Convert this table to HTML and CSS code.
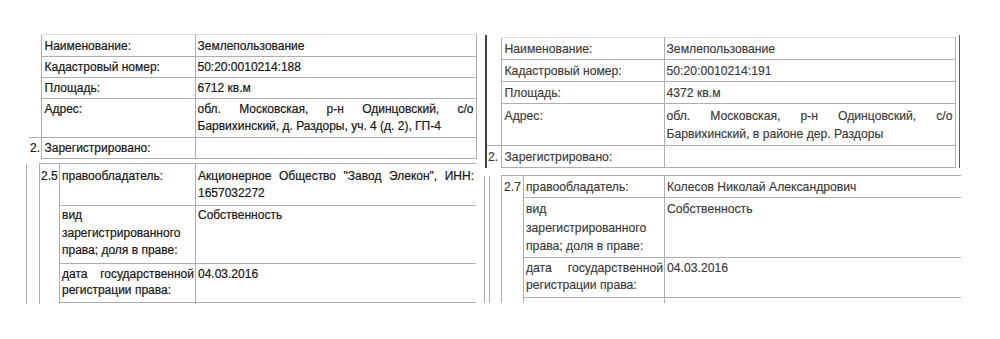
FILE: index.html
```html
<!DOCTYPE html>
<html lang="ru">
<head>
<meta charset="utf-8">
<title>Выписка</title>
<link rel="stylesheet" href="styles.css">
</head>
<body>
<div class="page">
  <section class="panel panel-left">
    <div class="block ltop">
      <table class="tbl">
        <colgroup><col class="c-n1"><col class="c-l1"><col class="c-v1"></colgroup>
        <tr class="first"><td class="n"></td><td class="l">Наименование:</td><td class="v">Землепользование</td></tr>
        <tr><td class="n"></td><td class="l">Кадастровый номер:</td><td class="v">50:20:0010214:188</td></tr>
        <tr><td class="n"></td><td class="l">Площадь:</td><td class="v">6712 кв.м</td></tr>
        <tr class="addr"><td class="n"></td><td class="l">Адрес:</td><td class="v j">обл. Московская, р-н Одинцовский, с/о Барвихинский, д. Раздоры, уч. 4 (д. 2), ГП-4</td></tr>
        <tr><td class="n nt">2.</td><td class="l">Зарегистрировано:</td><td class="v"></td></tr>
      </table>
    </div>
    <div class="block lbot">
      <table class="tbl">
        <colgroup><col class="c-o2"><col class="c-n2"><col class="c-l2"><col class="c-v2"></colgroup>
        <tr class="r-a"><td class="o" rowspan="4"></td><td class="n2 nt" rowspan="4">2.5</td><td class="l">правообладатель:</td><td class="v j">Акционерное Общество "Завод Элекон", ИНН: 1657032272</td></tr>
        <tr class="r-b"><td class="l">вид зарегистрированного права; доля в праве:</td><td class="v">Собственность</td></tr>
        <tr class="r-c"><td class="l j">дата государственной регистрации права:</td><td class="v">04.03.2016</td></tr>
        <tr class="r-d"><td class="l"></td><td class="v"></td></tr>
      </table>
    </div>
  </section>

  <section class="panel panel-right">
    <div class="block rtop">
      <table class="tbl">
        <colgroup><col class="c-n3"><col class="c-l3"><col class="c-v3"></colgroup>
        <tr class="first"><td class="n"></td><td class="l">Наименование:</td><td class="v">Землепользование</td></tr>
        <tr><td class="n"></td><td class="l">Кадастровый номер:</td><td class="v">50:20:0010214:191</td></tr>
        <tr><td class="n"></td><td class="l">Площадь:</td><td class="v">4372 кв.м</td></tr>
        <tr class="addr"><td class="n"></td><td class="l">Адрес:</td><td class="v j">обл. Московская, р-н Одинцовский, с/о Барвихинский, в районе дер. Раздоры</td></tr>
        <tr><td class="n nt">2.</td><td class="l">Зарегистрировано:</td><td class="v"></td></tr>
      </table>
    </div>
    <div class="block rbot">
      <table class="tbl">
        <colgroup><col class="c-o4"><col class="c-e4"><col class="c-n4"><col class="c-l4"><col class="c-v4"></colgroup>
        <tr class="r-a"><td class="o" rowspan="4"></td><td class="e" rowspan="4"></td><td class="n2 nt" rowspan="4">2.7</td><td class="l">правообладатель:</td><td class="v">Колесов Николай Александрович</td></tr>
        <tr class="r-b"><td class="l">вид зарегистрированного права; доля в праве:</td><td class="v">Собственность</td></tr>
        <tr class="r-c"><td class="l j">дата государственной регистрации права:</td><td class="v">04.03.2016</td></tr>
        <tr class="r-d"><td class="l"></td><td class="v"></td></tr>
      </table>
    </div>
  </section>
</div>
</body>
</html>
```

FILE: styles.css
```css
html, body {
  margin: 0;
  padding: 0;
  background: #ffffff;
}

body {
  width: 1000px;
  height: 339px;
  overflow: hidden;
  font-family: "Liberation Sans", Arial, sans-serif;
  font-size: 12px;
}

.page {
  display: flex;
  align-items: flex-start;
  padding-left: 26px;
  gap: 8px;
}

.panel {
  display: flex;
  flex-direction: column;
}

.panel-left {
  width: 450px;
  color: #161616;
  -webkit-text-stroke: 0.2px #161616;
}

.panel-right {
  width: 477px;
  color: #3a3a3a;
  font-size: 12.2px;
  -webkit-text-stroke: 0.15px #3a3a3a;
}

.tbl {
  border-collapse: collapse;
  table-layout: fixed;
}

.tbl td {
  vertical-align: top;
  padding: 2px 2px 1px 3px;
  line-height: 17px;
  overflow: hidden;
}

.tbl td.v { padding-left: 2px; }

.tbl td.l,
.tbl td.v {
  border: 1px solid #aeaeae;
}

.tbl tr.first td.l,
.tbl tr.first td.v {
  border-top-color: #dedede;
}

.tbl td.n {
  padding: 2px 0 0 1px;
  border: none;
}

.tbl td.nt {
  border-top: 1px solid #aeaeae;
}

.j {
  text-align: justify;
}

/* ---------- left top ---------- */
.ltop {
  margin-top: 34px;
  margin-left: 3px;
}
.ltop .tbl { width: 447px; }
.c-n1 { width: 12px; }
.c-l1 { width: 154px; }
.c-v1 { width: 281px; }
.ltop tr.first td { padding-top: 3px; }
.ltop tr.addr td { padding-top: 2px; padding-bottom: 2px; }

/* ---------- left bottom ---------- */
.lbot {
  margin-top: 4px;
  height: 141px;
  overflow: hidden;
}
.lbot .tbl { width: 450px; }
.c-o2 { width: 13px; }
.c-n2 { width: 20px; }
.c-l2 { width: 136px; }
.c-v2 { width: 281px; }

.tbl td.o {
  border-left: 1px solid #aeaeae;
  border-right: 1px solid #aeaeae;
  padding: 0;
}
.tbl td.e {
  border-right: 1px solid #aeaeae;
  padding: 0;
}
.tbl td.n2 {
  padding: 4px 0 0 1px;
  border-right: 1px solid #aeaeae;
}
.lbot td.l { padding-left: 2px; padding-right: 1px; }
.lbot tr.r-a td { padding-top: 4px; padding-bottom: 3px; }
.lbot tr.r-a td.o { padding: 0; }
.lbot tr.r-b td { padding-top: 1px; padding-bottom: 3px; line-height: 17.5px; }
.lbot tr.r-c td { padding-top: 2px; padding-bottom: 3px; line-height: 16.5px; }
.lbot tr.r-d td { height: 20px; padding: 0; }

/* ---------- right top ---------- */
.rtop {
  margin-top: 35px;
  margin-left: 1px;
  padding-top: 2px;
  padding-right: 3px;
  border-left: 2px solid #3e3e3e;
  border-right: 1px solid #5e5e5e;
  align-self: flex-start;
}
.rtop .tbl { width: 468px; }
.c-n3 { width: 14px; }
.c-l3 { width: 163px; }
.c-v3 { width: 291px; }
.rtop td { line-height: 18px; padding-top: 2px; padding-bottom: 1px; }
.rtop td.n { padding-left: 1px; }
.rtop tr.addr td { padding-top: 3px; padding-bottom: 2px; }

/* ---------- right bottom ---------- */
.rbot {
  margin-top: 7px;
  height: 128px;
  overflow: hidden;
}
.rbot .tbl { width: 477px; }
.c-o4 { width: 5px; }
.c-e4 { width: 12px; }
.c-n4 { width: 22px; }
.c-l4 { width: 141px; }
.c-v4 { width: 297px; }
.rbot td { line-height: 18px; }
.rbot td.n2 { padding-top: 2px; padding-left: 2px; }
.rbot td.l { padding-left: 2px; padding-right: 1px; }
.rbot tr.r-a td { padding-top: 2px; padding-bottom: 1px; }
.rbot tr.r-a td.o, .rbot tr.r-a td.e { padding: 0; }
.rbot tr.r-b td { padding-top: 2px; padding-bottom: 1px; line-height: 18.5px; }
.rbot tr.r-c td { padding-top: 2px; padding-bottom: 3px; line-height: 17px; }
.rbot tr.r-d td { height: 20px; padding: 0; }
```
